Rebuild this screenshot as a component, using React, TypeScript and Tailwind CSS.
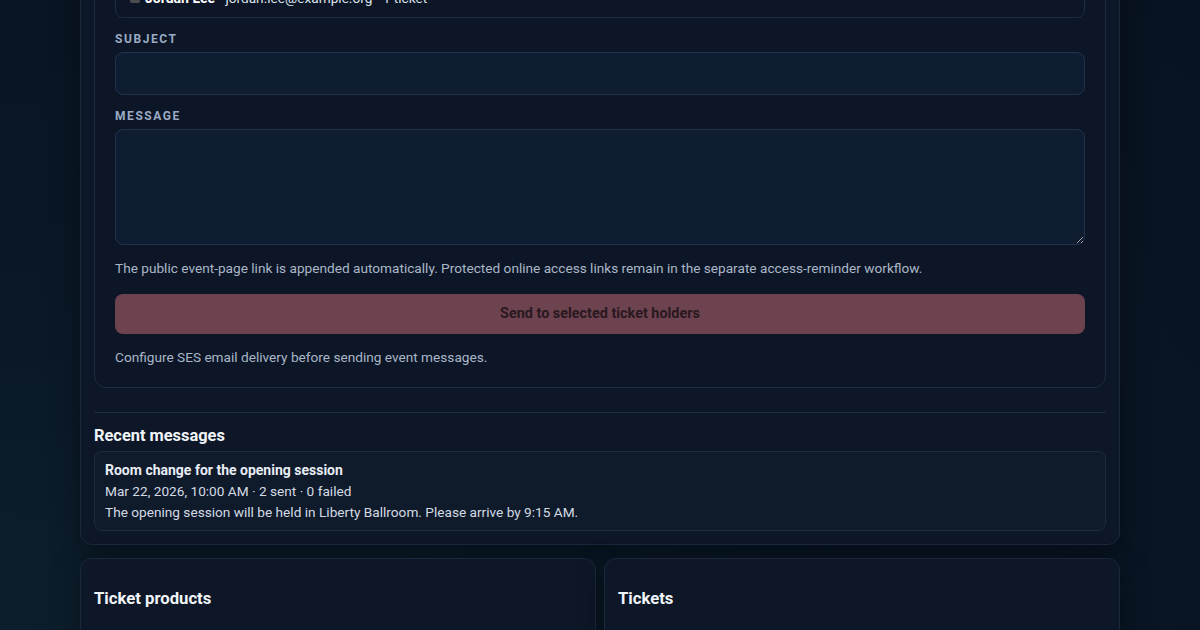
const recipients = [
  { name: 'Avery Chen', email: 'avery.chen@example.org', tickets: '2 tickets' },
  { name: 'Jordan Lee', email: 'jordan.lee@example.org', tickets: '1 ticket' },
];

const Field = ({ label, children }: { label: string; children: React.ReactNode }) => (
  <div className="flex flex-col gap-[5px]">
    <label className="text-[12px] font-bold uppercase tracking-[0.13em] text-[#9aabc3] leading-4">{label}</label>
    {children}
  </div>
);

const App = () => {
  return (
    <div
      className="h-[630px] overflow-hidden bg-[radial-gradient(ellipse_at_0%_100%,#0c1e2c_0%,#0a1725_45%,#081321_100%)] text-[13.65px] text-[#c9d2de]"
      style={{ fontFamily: 'Roboto, "Liberation Sans", Arial, sans-serif' }}
    >
      <div className="mx-auto w-[1040px] -mt-[104px]">
        <section className="rounded-xl border border-[#1b283b] bg-[#0d1727] p-[13px] shadow-[0_10px_30px_rgba(0,0,0,0.35)]">
          <div className="flex flex-col rounded-xl border border-[#1f2d42] bg-[#0c1626] p-5">
            <div className="flex flex-col gap-[13px]">
              <Field label="Recipients">
                <div className="flex flex-col gap-1 rounded-lg border border-[#1f2d42] bg-[#0c1626] px-[14px] py-2">
                  {recipients.map((r) => (
                    <div key={r.email} className="flex items-center gap-[5px] leading-[22px] text-[#dde3ec]">
                      <span className="h-[10px] w-[10px] rounded-[2px] bg-[#4b4d50]" />
                      <span>
                        <span className="text-[14px] font-bold text-white">{r.name}</span> · {r.email} · {r.tickets}
                      </span>
                    </div>
                  ))}
                </div>
              </Field>
              <Field label="Subject">
                <input className="h-[43px] rounded-lg border border-[#22324a] bg-[#0f1d33] px-3 text-[#e2e8f0] outline-none" />
              </Field>
              <Field label="Message">
                <textarea className="h-[116px] rounded-lg border border-[#22324a] bg-[#0f1d33] px-3 py-2 text-[#e2e8f0] outline-none" />
              </Field>
            </div>
            <p className="mt-[13px] leading-5 text-[#aab6c8]">
              The public event-page link is appended automatically. Protected online access links remain in the separate access-reminder workflow.
            </p>
            <button className="mt-4 h-10 rounded-lg bg-[#6d4350] text-[14.4px] font-bold text-[#2a1820]">Send to selected ticket holders</button>
            <p className="mt-[13px] leading-5 text-[#aab6c8]">Configure SES email delivery before sending event messages.</p>
          </div>

          <div className="mt-6 border-t border-[#1f2c40] pt-[11px]">
            <h3 className="text-[16.4px] font-bold leading-6 text-[#f1f5f9]">Recent messages</h3>
            <div className="mt-[3px] rounded-lg border border-[#1f2c40] bg-[#0f1a2b] px-[10px] pt-2 pb-[7px] leading-[21px]">
              <div className="text-[14px] font-bold text-[#e8edf4]">Room change for the opening session</div>
              <div className="text-[#d3dae4]">Mar 22, 2026, 10:00 AM · 2 sent · 0 failed</div>
              <div className="text-[#d3dae4]">The opening session will be held in Liberty Ballroom. Please arrive by 9:15 AM.</div>
            </div>
          </div>
        </section>

        <div className="mt-[13px] grid grid-cols-2 gap-2">
          <section className="h-[140px] rounded-xl border border-[#1b283b] bg-[#0d1727] px-[13px] pt-7 shadow-[0_10px_30px_rgba(0,0,0,0.35)]">
            <h3 className="text-[16.7px] font-bold leading-6 text-[#f1f5f9]">Ticket products</h3>
          </section>
          <section className="h-[140px] rounded-xl border border-[#1b283b] bg-[#0d1727] px-[13px] pt-7 shadow-[0_10px_30px_rgba(0,0,0,0.35)]">
            <h3 className="text-[16.7px] font-bold leading-6 text-[#f1f5f9]">Tickets</h3>
          </section>
        </div>
      </div>
    </div>
  );
};

export default App;
